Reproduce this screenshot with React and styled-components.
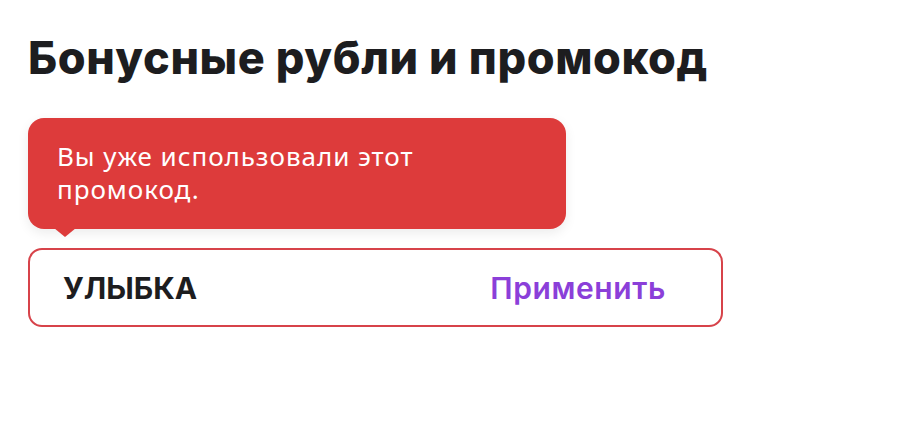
import React from 'react';
import styled, { createGlobalStyle } from 'styled-components';

const GlobalStyle = createGlobalStyle`
  html, body {
    margin: 0;
    padding: 0;
    background: #fff;
  }
  body {
    font-family: 'Noto Sans', 'Open Sans', sans-serif;
    color: #1f1f1f;
  }
`;

const Page = styled.div`
  padding: 28px 28px 0 28px;
  width: 924px;
  box-sizing: border-box;
`;

const Title = styled.h1`
  margin: 0;
  font-family: Inter, 'Noto Sans', sans-serif;
  font-weight: 800;
  font-size: 45px;
  line-height: 60px;
  letter-spacing: 0.6px;
  color: #1d1d1f;
`;

const PromoBlock = styled.div`
  display: flex;
  flex-direction: column;
  align-items: flex-start;
  margin-top: 30px;
`;

// Error tooltip above the field
const Tooltip = styled.div`
  position: relative;
  width: 538px;
  box-sizing: border-box;
  padding: 22px 28px 23px 29px;
  background: #dd3b3b;
  color: #fff;
  border-radius: 16px;
  font-size: 26px;
  line-height: 33px;
  letter-spacing: 0.95px;
  box-shadow: 0 4px 12px rgba(0, 0, 0, 0.08);

  &::after {
    content: '';
    position: absolute;
    left: 26px;
    bottom: -8px;
    width: 0;
    height: 0;
    border-left: 11px solid transparent;
    border-right: 11px solid transparent;
    border-top: 9px solid #dd3b3b;
  }
`;

const Field = styled.div`
  margin-top: 19px;
  width: 695px;
  height: 79px;
  box-sizing: border-box;
  border: 2px solid #d7434a;
  border-radius: 14px;
  display: flex;
  align-items: center;
  justify-content: space-between;
  padding: 0 55px 0 33px;
`;

const Code = styled.span`
  font-family: Inter, 'Noto Sans', sans-serif;
  font-weight: 700;
  font-size: 30px;
  color: #1d1d1f;
`;

const ApplyButton = styled.button`
  border: none;
  background: none;
  padding: 0;
  cursor: pointer;
  font-family: Inter, 'Noto Sans', sans-serif;
  font-weight: 600;
  font-size: 30px;
  letter-spacing: 0.6px;
  color: #8b3fd9;
`;

export default function App() {
  return (
    <>
      <GlobalStyle />
      <Page>
        <Title>Бонусные рубли и промокод</Title>
        <PromoBlock>
          <Tooltip>
            Вы уже использовали этот
            <br />
            промокод.
          </Tooltip>
          <Field>
            <Code>УЛЫБКА</Code>
            <ApplyButton>Применить</ApplyButton>
          </Field>
        </PromoBlock>
      </Page>
    </>
  );
}
